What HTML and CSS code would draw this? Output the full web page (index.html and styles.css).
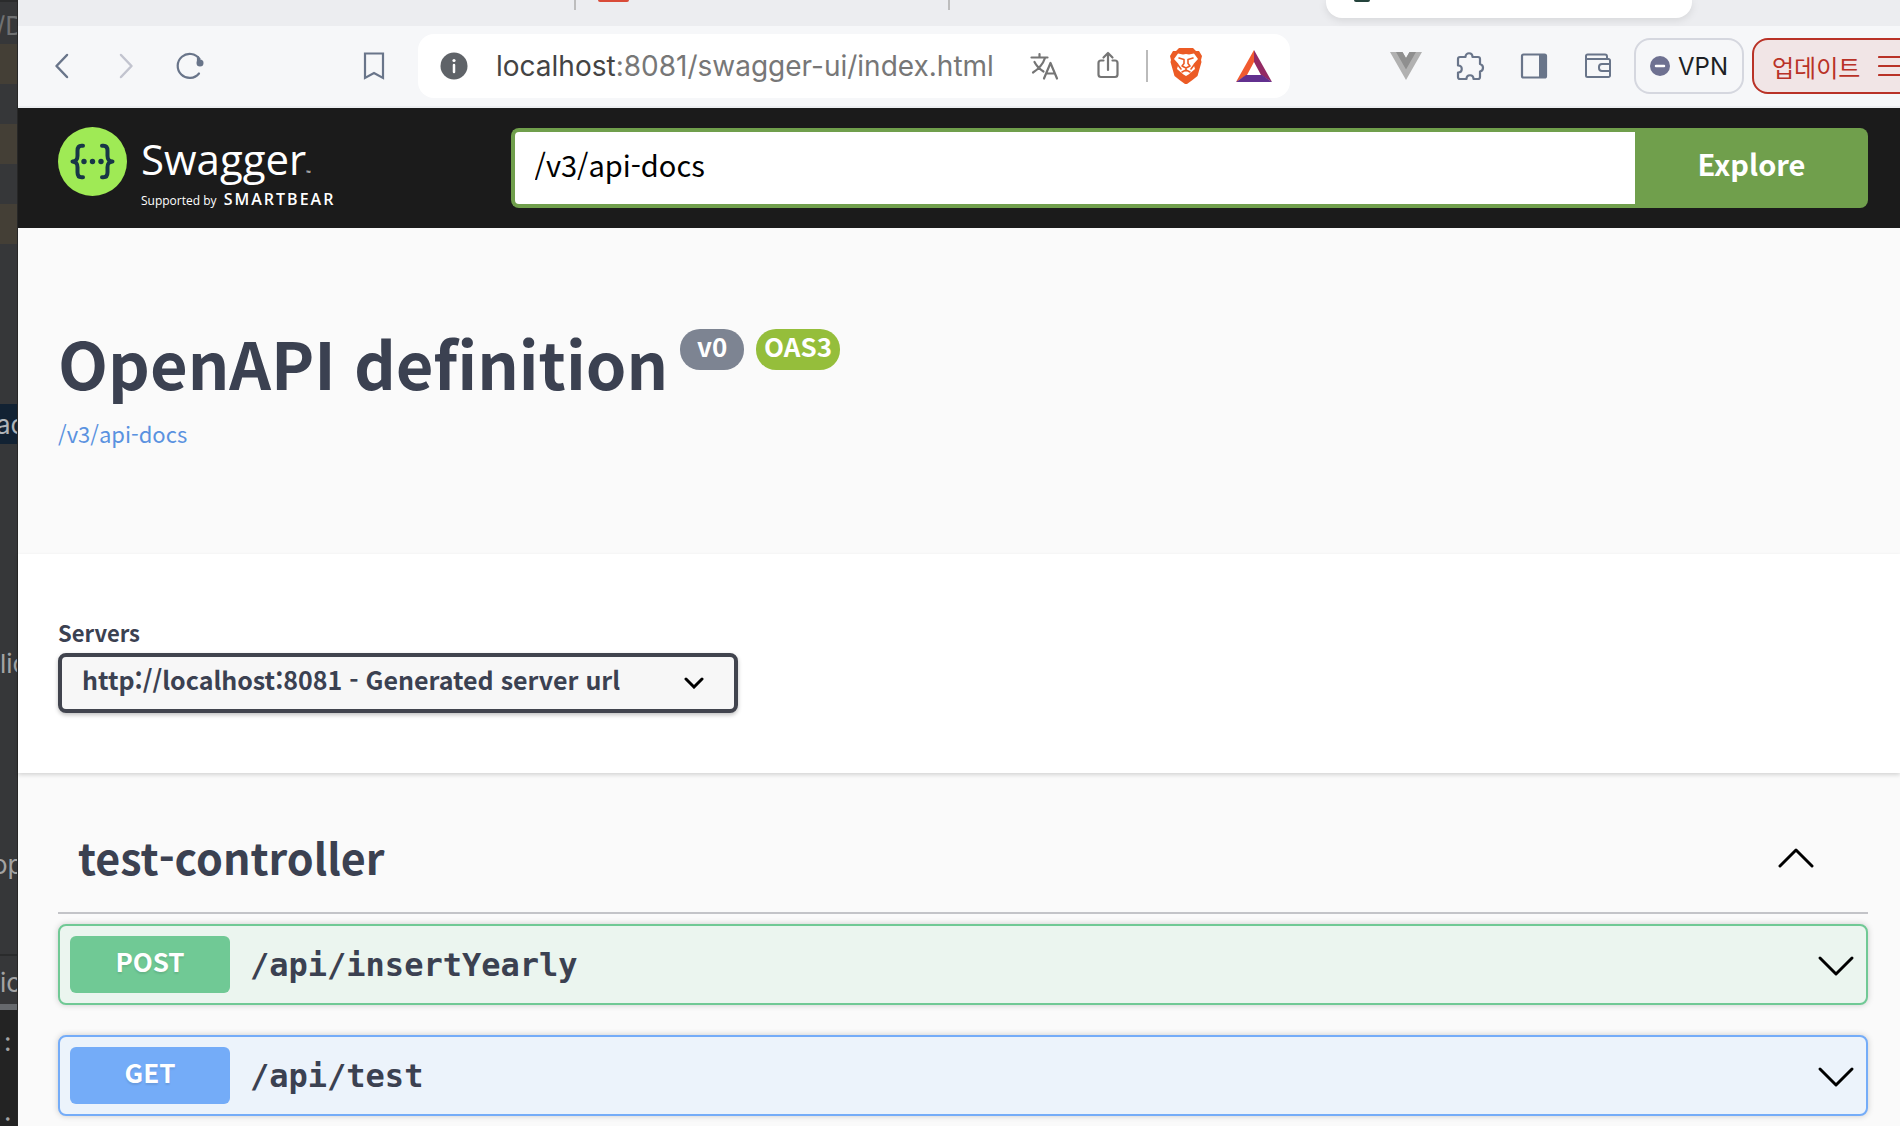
FILE: index.html
```html
<!DOCTYPE html>
<html lang="ko">
<head>
    <meta charset="UTF-8">
    <meta name="viewport" content="width=device-width, initial-scale=1.0">
    <title>Swagger UI</title>
    <link rel="stylesheet" href="styles.css">
</head>
<body>

    <!-- editor behind the browser window -->
    <aside class="editor">
        <div class="line path">/D</div>
        <div class="line tan"></div>
        <div class="line"></div>
        <div class="line tan"></div>
        <div class="line"></div>
        <div class="line tan"></div>
        <div class="block"></div>
        <div class="line selected">ac</div>
        <div class="block tall">lic</div>
        <div class="block tool">op</div>
        <div class="line console-tab">ic</div>
        <div class="console">
            <div>:</div>
            <div>:</div>
        </div>
    </aside>

    <div class="browser">
        <div class="tabs">
            <span class="tab-line first"></span>
            <span class="tab-icon"></span>
            <span class="tab-line second"></span>
            <div class="tab-active"><span class="favicon"></span></div>
        </div>

        <div class="toolbar">
            <button class="icon-btn" aria-label="Back">
                <svg viewBox="0 0 32 32"><path d="M21 5 10.500 16 21 27" stroke="#69758a" stroke-width="2.500"/></svg>
            </button>
            <button class="icon-btn" aria-label="Forward">
                <svg viewBox="0 0 32 32"><path d="M11 5 21.500 16 11 27" stroke="#c2c4cf" stroke-width="2.500"/></svg>
            </button>
            <button class="icon-btn" aria-label="Reload">
                <svg viewBox="0 0 32 32"><path d="M25 23.500a12 12 0 1 1 .5-14.500" stroke="#69758a" stroke-width="2.200"/><circle cx="26" cy="13" r="3.500" fill="#69758a"/><path d="M24 7v5" stroke="#69758a" stroke-width="2.200"/></svg>
            </button>
            <button class="icon-btn bookmark" aria-label="Bookmark">
                <svg viewBox="0 0 32 32"><path d="M7 3.500h18V28l-9-5-9 5z" stroke="#69758a" stroke-width="2.200" stroke-linejoin="miter"/></svg>
            </button>

            <div class="address">
                <button class="icon-btn" aria-label="Site information">
                    <svg viewBox="0 0 32 32"><circle cx="16" cy="16" r="13.500" fill="#5f6368"/><circle cx="16" cy="10.500" r="1.600" fill="#fff"/><path d="M16 15v7" stroke="#fff" stroke-width="2.500"/></svg>
                </button>
                <div class="url" role="textbox" contenteditable="true" spellcheck="false" aria-label="Address">localhost<span>:8081/swagger-ui/index.html</span></div>
                <button class="icon-btn" aria-label="Translate">
                    <svg viewBox="0 0 32 32"><g stroke="#757575" stroke-width="2.200"><path d="M3.500 7.500h16M11.500 4v3.500M17 8c-2 6-6.500 11-12 14.500M6.500 12c2 4 5 7 9 9.500"/><path d="M16 28.500 22.500 13 29 28.500M18.500 23.500h8"/></g></svg>
                </button>
                <button class="icon-btn" aria-label="Share">
                    <svg viewBox="0 0 32 32"><g stroke="#757575" stroke-width="2.200"><path d="M11.500 10.500H9a2.500 2.500 0 0 0-2.500 2.500v11.500A2.500 2.500 0 0 0 9 27h14a2.500 2.500 0 0 0 2.500-2.500V13a2.500 2.500 0 0 0-2.500-2.500h-2.500"/><path d="M16 20V3M11.500 7.500 16 3l4.500 4.500"/></g></svg>
                </button>
                <span class="divider"></span>
                <button class="icon-btn" aria-label="Brave Shields">
                    <svg viewBox="0 0 32 36"><path d="M9 0h14l3 3h3l3 5-1 4 .5 2-4 14-5 4-5.500 4h-2l-5.500-4-5-4L.5 14 1 12 0 8l3-5h3z" fill="#ec5b25"/><path d="M8 5.500 4 11l4.500 5-1.500 5 3.500 3 3 2.500L16 28l2.500-1.500 3-2.500 3.500-3-1.500-5 4.500-5-4-5.500-5 1-3-.5-3 .5z" fill="#fff"/><path d="m9 10 5 1.500v4L12 18l4 2 4-2-2-2.500v-4L23 10M16 20v3M12 24l4-2 4 2M8 17l3 4M24 17l-3 4" stroke="#ec5b25" stroke-width="1.600"/></svg>
                </button>
                <button class="icon-btn bat" aria-label="Brave Rewards">
                    <svg viewBox="0 0 36 32"><path d="M18 0v12l-7 13L0 32z" fill="#f15a2f"/><path d="M18 0v12l7 13 11 7z" fill="#932a64"/><path d="M0 32 10 25h16l10 7z" fill="#62308f"/></svg>
                </button>
            </div>

            <button class="icon-btn" aria-label="Vue devtools">
                <svg viewBox="0 0 32 32"><path d="M0 2h12.500L16 8l3.500-6H32L16 30z" fill="#b1b1b1"/><path d="M6 2h6.500L16 8l3.500-6H26L16 19.500z" fill="#8f8f8f"/></svg>
            </button>
            <button class="icon-btn" aria-label="Extensions">
                <svg viewBox="0 0 32 32"><path d="M4 9a2 2 0 0 1 2-2h5.500c0-5 7-5 7 0H24a2 2 0 0 1 2 2v5c4 1 4 6.500 0 7.500V27a2 2 0 0 1-2 2h-4.500c0-5-7-5-7 0H6a2 2 0 0 1-2-2v-4.500c5 0 5-7 0-7z" stroke="#69758a" stroke-width="2.200"/></svg>
            </button>
            <button class="icon-btn" aria-label="Sidebar">
                <svg viewBox="0 0 32 32"><rect x="4" y="4.500" width="24" height="23" rx="1.500" stroke="#69758a" stroke-width="2.200"/><path d="M21 4h7v24h-7z" fill="#69758a"/></svg>
            </button>
            <button class="icon-btn" aria-label="Wallet">
                <svg viewBox="0 0 32 32"><g stroke="#69758a" stroke-width="2"><path d="M4 6a1.500 1.500 0 0 1 1.500-1.500H23a2 2 0 0 1 2 2V9M4 6v19.500A1.500 1.500 0 0 0 5.500 27h21a1.500 1.500 0 0 0 1.500-1.500V10.500A1.500 1.500 0 0 0 26.500 9H5.500M28 14h-8a3 3 0 0 0-3 3v1a3 3 0 0 0 3 3h8"/></g></svg>
            </button>
            <button class="vpn">
                <svg viewBox="0 0 20 20" aria-hidden="true"><circle cx="10" cy="10" r="10" fill="#6e7191"/><path d="M6 10h8" stroke="#fff" stroke-width="2.500"/></svg>
                VPN
            </button>
            <button class="update">
                업데이트
                <svg viewBox="0 0 28 22" aria-hidden="true"><path d="M1 2h27M1 11h27M1 20h27" stroke="#b93227" stroke-width="2.200"/></svg>
            </button>
        </div>

        <main class="swagger-ui">
            <header class="topbar">
                <a class="logo" href="#">
                    <svg class="logo-mark" viewBox="0 0 69 69" aria-hidden="true">
                        <circle cx="34.500" cy="34.500" r="34.500" fill="#9fea55"/>
                        <g stroke="#173647" stroke-width="4" fill="none">
                            <path d="M25 18.700h-1.500c-3 0-4 2-4 5v5c0 3.500-1 5.300-5 5.800 4 .5 5 2.300 5 5.800v5c0 3 1 5 4 5H25"/>
                            <path d="M44 18.700h1.500c3 0 4 2 4 5v5c0 3.500 1 5.300 5 5.800-4 .5-5 2.300-5 5.800v5c0 3-1 5-4 5H44"/>
                        </g>
                        <g fill="#173647"><circle cx="26" cy="34.500" r="2.700"/><circle cx="34.500" cy="34.500" r="2.700"/><circle cx="43" cy="34.500" r="2.700"/></g>
                    </svg>
                    <span class="logo-text">
                        <span class="logo-name">Swagger<small>™</small></span>
                        <span class="logo-by">Supported by <b>SMARTBEAR</b></span>
                    </span>
                </a>
                <form class="download-url">
                    <input type="text" value="/v3/api-docs" aria-label="API definition URL">
                    <button type="button">Explore</button>
                </form>
            </header>

            <section class="info">
                <h2>OpenAPI definition <span class="version">v0</span><span class="version oas">OAS3</span></h2>
                <a href="#">/v3/api-docs</a>
            </section>

            <section class="servers">
                <label for="servers">Servers</label>
                <select id="servers">
                    <option>http://localhost:8081 - Generated server url</option>
                </select>
            </section>

            <section class="operations">
                <h3>
                    test-controller
                    <button class="chevron" aria-label="Collapse operations">
                        <svg viewBox="0 0 40 40"><path d="m4 30 16-16 16 16"/></svg>
                    </button>
                </h3>
                <div class="opblock post">
                    <span class="method">POST</span>
                    <span class="route">/api/insertYearly</span>
                    <button class="chevron" aria-label="Expand post /api/insertYearly">
                        <svg viewBox="0 0 40 40"><path d="m4 13 16 16 16-16"/></svg>
                    </button>
                </div>
                <div class="opblock get">
                    <span class="method">GET</span>
                    <span class="route">/api/test</span>
                    <button class="chevron" aria-label="Expand get /api/test">
                        <svg viewBox="0 0 40 40"><path d="m4 13 16 16 16-16"/></svg>
                    </button>
                </div>
            </section>
        </main>
    </div>

</body>
</html>
```
FILE: styles.css
```css
* {
    box-sizing: border-box;
}

body {
    margin: 0;
    height: 100vh;
    display: flex;
    overflow: hidden;
    font-family: "Noto Sans CJK KR", sans-serif;
    color: #3b4151;
}

button {
    padding: 0;
    border: none;
    background: none;
    font-family: inherit;
    cursor: pointer;
}

svg {
    display: block;
    fill: none;
    stroke-linecap: round;
    stroke-linejoin: round;
}

/* editor strip */
.editor {
    flex: 0 0 18px;
    overflow: hidden;
    background-color: #363739;
    border-right: 1px solid #272727;
    color: #a3a3a3;
    font-family: Inter, sans-serif;
    font-size: 26px;
    white-space: nowrap;
}

.line {
    height: 40px;
    line-height: 42px;
}

.path {
    height: 44px;
    line-height: 48px;
    border-top: 2px solid #2a2b2c;
    color: #707172;
    text-indent: -4px;
}

.tan {
    background-color: #443f36;
}

.block {
    height: 160px;
}

.selected {
    background-color: #122233;
    color: #b0b4b8;
    text-indent: -4px;
}

.block.tall {
    height: 405px;
    padding-top: 204px;
}

.block.tool {
    height: 107px;
    text-indent: -8px;
    border-bottom: 2px solid #2a2b2c;
}

.console-tab {
    height: 54px;
    line-height: 54px;
    border-bottom: 6px solid #66696d;
}

.console {
    height: 116px;
    padding: 12px 4px 0;
    background-color: #232323;
    line-height: 40px;
}

.console div {
    height: 80px;
}

.console div:last-child {
    height: 24px;
}

/* browser window */
.browser {
    flex: 1;
    min-width: 0;
    background-color: #fafafa;
}

.tabs {
    display: flex;
    height: 26px;
    background-color: #ecedf0;
}

.tab-line {
    width: 2px;
    height: 10px;
    background-color: #bdbdbd;
}

.tab-line.first {
    margin-left: 556px;
}

.tab-icon {
    width: 31px;
    height: 2px;
    margin-left: 22px;
    border-radius: 0 0 4px 4px;
    background-color: #d94b38;
}

.tab-line.second {
    margin-left: 319px;
}

.tab-active {
    width: 366px;
    height: 18px;
    margin-left: 376px;
    padding-left: 28px;
    border-radius: 0 0 16px 16px;
    background-color: #fff;
    box-shadow: 0 2px 8px rgba(0, 0, 0, 0.1);
}

.favicon {
    display: block;
    width: 16px;
    height: 2px;
    border-radius: 0 0 8px 8px;
    background-color: #24433c;
}

.toolbar {
    display: flex;
    align-items: center;
    gap: 32px;
    height: 82px;
    padding-left: 28px;
    overflow: hidden;
    background-color: #f6f7f9;
    border-bottom: 2px solid #eceef1;
}

.icon-btn {
    flex: 0 0 32px;
}

.icon-btn svg {
    width: 100%;
}

.bookmark {
    margin-left: 120px;
}

.address {
    flex: 1;
    display: flex;
    align-items: center;
    gap: 32px;
    min-width: 0;
    height: 64px;
    margin-left: -4px;
    margin-right: 68px;
    padding: 0 18px 0 20px;
    border-radius: 16px;
    background-color: #fff;
}

.url {
    flex: 1;
    margin-left: -6px;
    overflow: hidden;
    font-family: Inter, sans-serif;
    font-size: 28px;
    line-height: 40px;
    white-space: nowrap;
    color: #444;
}

.url span {
    color: #777;
}

.divider {
    width: 2px;
    height: 32px;
    margin: 0 -10px;
    background-color: #bbb;
}

.bat {
    flex-basis: 36px;
    margin-left: 2px;
}

.vpn,
.update {
    display: flex;
    align-items: center;
    height: 56px;
    border-radius: 16px;
    font-size: 24px;
}

.vpn {
    gap: 8px;
    margin-left: -12px;
    padding: 0 14px;
    border: 2px solid #d5d7df;
    font-family: Inter, sans-serif;
    color: #1d1f25;
}

.vpn svg {
    width: 20px;
}

.update {
    flex: 0 0 188px;
    gap: 18px;
    margin-left: -24px;
    margin-right: -40px;
    padding-left: 18px;
    border: 2px solid #b93227;
    background-color: #f1e5e6;
    color: #b93227;
}

.update svg {
    width: 28px;
}

/* swagger top bar */
.topbar {
    display: flex;
    align-items: center;
    height: 120px;
    padding: 0 32px 0 40px;
    background-color: #1b1b1b;
}

.logo {
    flex: 1;
    display: flex;
    gap: 14px;
    color: #fff;
    font-family: "Open Sans", sans-serif;
    text-decoration: none;
}

.logo-mark {
    width: 69px;
    height: 69px;
}

.logo-text {
    display: flex;
    flex-direction: column;
    white-space: nowrap;
}

.logo-name {
    font-size: 42px;
    line-height: 64px;
}

.logo-name small {
    font-size: 6px;
    line-height: 1;
}

.logo-by {
    font-size: 12px;
    line-height: 16px;
}

.logo-by b {
    margin-left: 4px;
    font-size: 16px;
    font-weight: 600;
    letter-spacing: 2px;
}

.download-url {
    flex: 3;
    display: flex;
    height: 80px;
}

.download-url input {
    flex: 1;
    min-width: 0;
    padding: 0 20px 8px;
    border: 4px solid #709f4c;
    border-right: none;
    border-radius: 8px 0 0 8px;
    background-color: #fff;
    font-family: inherit;
    font-size: 29px;
    color: #000;
    outline: none;
}

.download-url button {
    width: 233px;
    padding-bottom: 10px;
    border-radius: 0 8px 8px 0;
    background-color: #709f4c;
    font-size: 29px;
    font-weight: 700;
    color: #fff;
}

/* definition title */
.info {
    padding: 96px 40px 104px;
}

.info h2 {
    display: flex;
    align-items: flex-start;
    gap: 12px;
    margin: 0 0 16px;
    font-size: 65px;
    line-height: 76px;
}

.info a {
    display: block;
    font-size: 22px;
    line-height: 34px;
    color: #5a92e0;
    text-decoration: none;
}

.version {
    min-width: 64px;
    height: 41px;
    margin-top: 5px;
    padding: 0 8px;
    border-radius: 20px;
    background-color: #7d8492;
    color: #fff;
    font-size: 26px;
    line-height: 34px;
    text-align: center;
}

.version.oas {
    background-color: #95be3b;
}

/* servers */
.servers {
    padding: 60px 40px;
    background-color: #fff;
    box-shadow: 0 2px 4px rgba(0, 0, 0, 0.15);
}

.servers label {
    display: block;
    margin-bottom: 3px;
    font-size: 22px;
    font-weight: 700;
    line-height: 36px;
}

.servers select {
    display: block;
    width: 680px;
    height: 60px;
    padding: 0 80px 8px 20px;
    border: 4px solid #41444e;
    border-radius: 8px;
    background: #f7f7f7 url("data:image/svg+xml,%3Csvg xmlns='http://www.w3.org/2000/svg' viewBox='0 0 20 12'%3E%3Cpath d='M2 2l8 8 8-8' fill='none' stroke='%23000' stroke-width='3' stroke-linecap='round'/%3E%3C/svg%3E") no-repeat right 30px center / 20px 12px;
    box-shadow: 0 2px 4px rgba(0, 0, 0, 0.25);
    font-family: inherit;
    font-size: 25px;
    font-weight: 700;
    color: #3b4151;
    appearance: none;
}

/* operations */
.operations {
    padding: 40px 32px 10px 40px;
}

.operations h3 {
    display: flex;
    align-items: center;
    justify-content: space-between;
    height: 101px;
    margin: 0 0 10px;
    padding: 0 52px 14px 20px;
    border-bottom: 2px solid #c3c4c8;
    font-size: 43px;
}

.chevron svg {
    width: 40px;
    stroke: #000;
    stroke-width: 3;
}

.opblock {
    display: flex;
    align-items: center;
    height: 81px;
    padding: 0 10px;
    border: 2px solid;
    border-radius: 8px;
    box-shadow: 0 0 6px rgba(0, 0, 0, 0.19);
}

.opblock + .opblock {
    margin-top: 30px;
}

.opblock.post {
    border-color: #70c995;
    background-color: #ebf5ef;
}

.opblock.get {
    border-color: #74acf8;
    background-color: #ecf3fb;
}

.method {
    width: 160px;
    height: 57px;
    border-radius: 6px;
    color: #fff;
    font-size: 26px;
    font-weight: 700;
    line-height: 50px;
    text-align: center;
    text-shadow: 0 2px 2px rgba(0, 0, 0, 0.1);
}

.post .method {
    background-color: #70c995;
}

.get .method {
    background-color: #74acf8;
}

.route {
    flex: 1;
    margin-left: 20px;
    font-family: "DejaVu Sans Mono", monospace;
    font-size: 32px;
    font-weight: 700;
}
```
